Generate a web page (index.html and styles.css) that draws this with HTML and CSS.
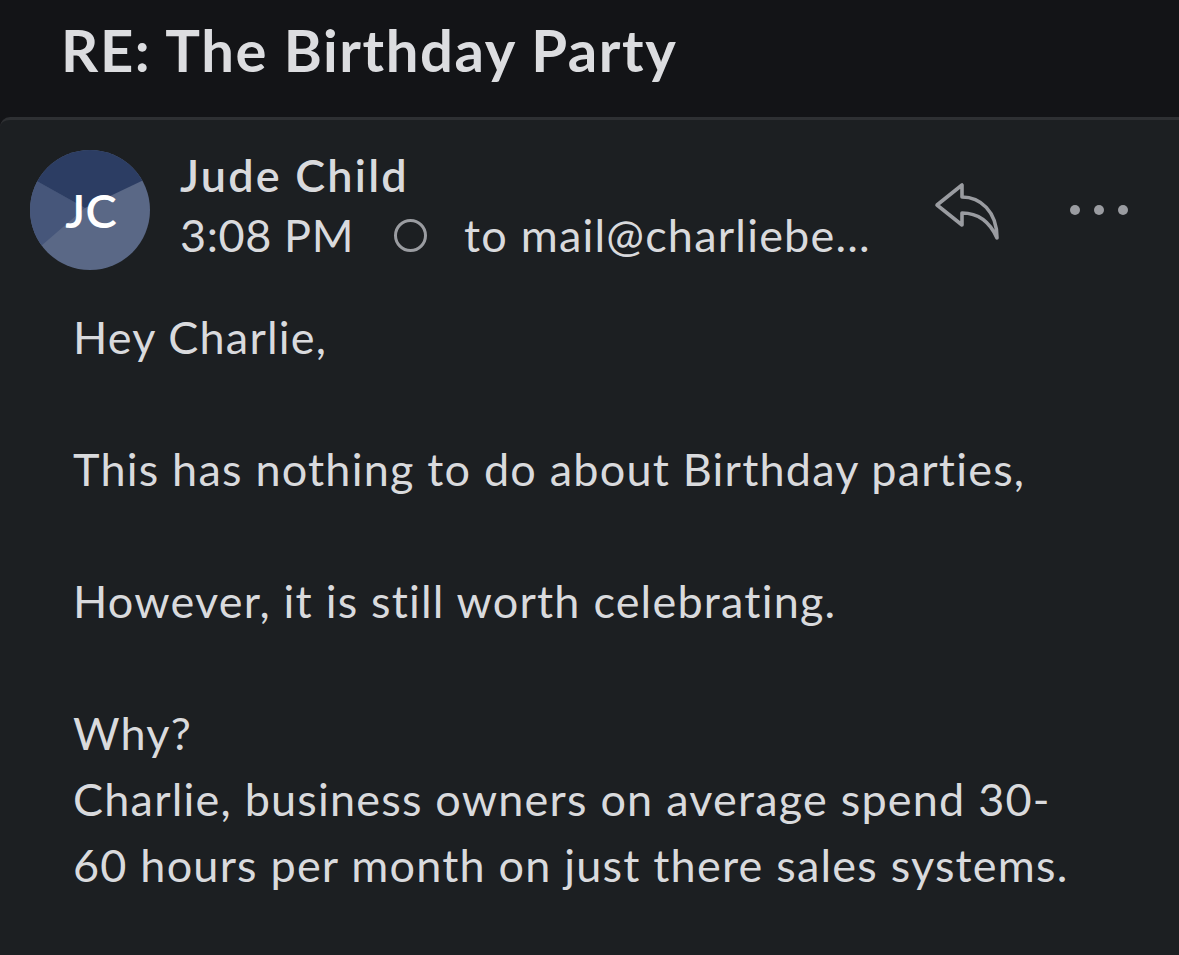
FILE: index.html
```html
<!DOCTYPE html>
<html lang="en">
<head>
<meta charset="utf-8">
<title>RE: The Birthday Party</title>
<link rel="stylesheet" href="styles.css">
</head>
<body>
<header class="topbar">
  <h1 class="subject">RE: The Birthday Party</h1>
</header>
<main class="card">
  <div class="meta">
    <div class="avatar">
      <svg class="avatar-bg" viewBox="0 0 120 120" width="120" height="120" aria-hidden="true">
        <defs><clipPath id="av"><circle cx="60" cy="60" r="60"/></clipPath></defs>
        <g clip-path="url(#av)">
          <rect width="120" height="120" fill="#5a6886"/>
          <polygon points="55,58 -40,5 -40,140" fill="#46567a"/>
          <polygon points="55,58 -40,5 -40,-40 160,-40 160,8" fill="#2c3d63"/>
        </g>
      </svg>
      <span class="initials">JC</span>
    </div>
    <div class="info">
      <div class="sender">Jude Child</div>
      <div class="sub">
        <span class="time">3:08 PM</span>
        <span class="ring"></span>
        <span class="to">to mail@charliebe...</span>
      </div>
    </div>
    <div class="actions">
      <svg class="reply" viewBox="0 0 80 65" width="80" height="65" aria-hidden="true">
        <path d="M12 27 L37 7 L37 19 C55 19 72 33 72 60 C64 42 52 35 37 35 L37 47 Z" fill="none" stroke="#9a9ca1" stroke-width="3.6" stroke-linejoin="round" stroke-linecap="round"/>
      </svg>
      <div class="more"><span></span><span></span><span></span></div>
    </div>
  </div>
  <div class="body">
    <p>Hey Charlie,</p>
    <p>This has nothing to do about Birthday parties,</p>
    <p>However, it is still worth celebrating.</p>
    <p>Why?<br>Charlie, business owners on average spend 30-<br>60 hours per month on just there sales systems.</p>
  </div>
</main>
</body>
</html>
```
FILE: styles.css
```css
* { box-sizing: border-box; }
html, body { margin: 0; padding: 0; }
body {
  width: 1179px;
  height: 955px;
  overflow: hidden;
  background: #131417;
  font-family: Lato, "Noto Sans", sans-serif;
  font-variant-ligatures: none;
  color: #d9dadd;
}
.topbar {
  height: 117px;
  padding-left: 61px;
  background: #131417;
}
.subject {
  margin: 0;
  font-size: 58px;
  font-weight: 700;
  letter-spacing: 1.6px;
  line-height: 100px;
  color: #dcdde0;
}
.card {
  height: 838px;
  background: #1c1f22;
  border-top: 3px solid #2e3033;
  border-top-left-radius: 10px;
}
.meta {
  display: flex;
  align-items: flex-start;
  padding: 30px 51px 0 30px;
}
.avatar {
  position: relative;
  width: 120px;
  height: 120px;
  flex: none;
}
.avatar-bg { display: block; }
.initials {
  position: absolute;
  inset: 0;
  display: flex;
  align-items: center;
  justify-content: center;
  padding-left: 2px;
  color: #ffffff;
  font-size: 47px;
  font-weight: 600;
}
.info {
  margin-left: 30px;
  margin-top: -5px;
  font-size: 45px;
  line-height: 60px;
}
.sender { font-weight: 600; letter-spacing: 2.2px; }
.sub { display: flex; align-items: center; }
.time { letter-spacing: 0.6px; }
.to { letter-spacing: 1.2px; }
.ring {
  width: 33px;
  height: 33px;
  border: 3px solid #9a9ca1;
  border-radius: 50%;
  margin: 0 37px 0 40px;
}
.actions {
  margin-left: auto;
  align-self: center;
  display: flex;
  align-items: center;
  gap: 65px;
}
.reply { display: block; }
.more { display: flex; gap: 14px; }
.more span {
  width: 10px;
  height: 10px;
  border-radius: 50%;
  background: #9a9ca1;
}
.body {
  padding: 34px 0 0 73px;
  font-size: 45px;
  letter-spacing: 1.2px;
  line-height: 66px;
}
.body p { margin: 0 0 66px; }
```
